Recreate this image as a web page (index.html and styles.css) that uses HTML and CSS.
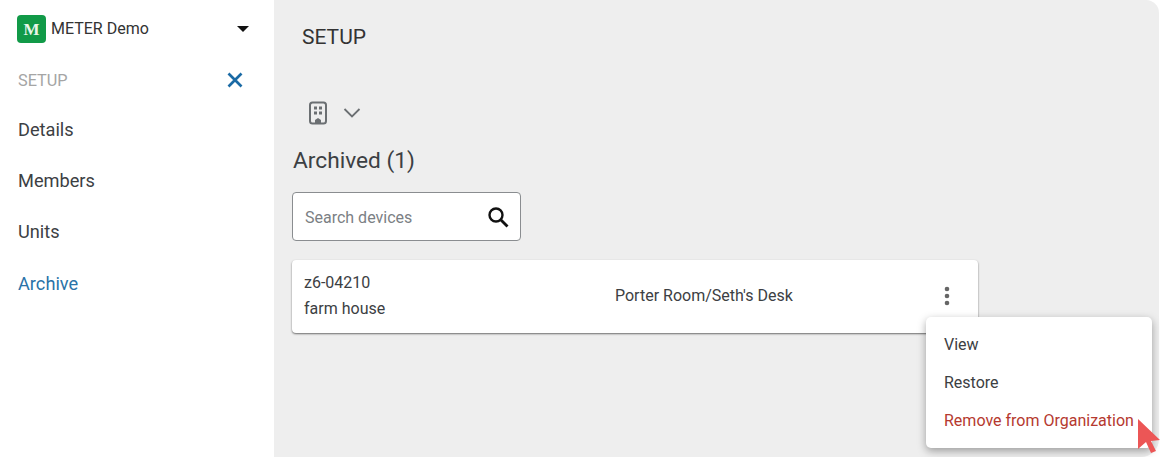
FILE: index.html
```html
<!DOCTYPE html>
<html lang="en">
<head>
    <meta charset="UTF-8">
    <meta name="viewport" content="width=device-width, initial-scale=1.0">
    <title>METER Demo - Setup</title>
    <link rel="stylesheet" href="styles.css">
</head>
<body>
    <div class="sidebar">
        <div class="org-row">
            <div class="org-logo">M</div>
            <span class="org-name">METER Demo</span>
            <svg class="org-caret" width="12" height="6" viewBox="0 0 12 6"><path d="M0 0h12L6 6z" fill="#111"/></svg>
        </div>
        <div class="setup-row">
            <span class="setup-label">SETUP</span>
            <svg class="setup-close" width="16" height="16" viewBox="0 0 16 16"><path d="M1.500 1.500l13 13M14.500 1.500l-13 13" stroke="#1a6aa5" stroke-width="2.700" fill="none"/></svg>
        </div>
        <div class="nav-item">Details</div>
        <div class="nav-item">Members</div>
        <div class="nav-item">Units</div>
        <div class="nav-item active">Archive</div>
    </div>

    <div class="main">
        <h1>SETUP</h1>
        <div class="filter-row">
            <svg width="20" height="24" viewBox="0 0 20 24">
                <rect x="2" y="1.500" width="16" height="21" rx="2.500" fill="none" stroke="#6b6f72" stroke-width="2"/>
                <path d="M6 5.500h3v3H6zM11 5.500h3v3h-3zM6 10.500h3v3H6zM11 10.500h3v3h-3zM7 22v-3l3-2 3 2v3z" fill="#6b6f72"/>
            </svg>
            <svg width="18" height="10" viewBox="0 0 18 10"><path d="M1.500 1l7.500 7.500L16.500 1" fill="none" stroke="#6b6f72" stroke-width="1.800"/></svg>
        </div>
        <h2>Archived (1)</h2>
        <div class="search-box">
            <span class="search-text">Search devices</span>
            <svg width="22" height="22" viewBox="0 0 22 22"><circle cx="9" cy="9" r="6.500" fill="none" stroke="#111" stroke-width="2.400"/><path d="M14 14l6.500 6.500" stroke="#111" stroke-width="2.800"/></svg>
        </div>
        <div class="device-card">
            <div class="device-info">
                <div>z6-04210</div>
                <div>farm house</div>
            </div>
            <div class="device-location">Porter Room/Seth's Desk</div>
            <svg class="device-more" width="8" height="20" viewBox="0 0 8 20"><circle cx="4" cy="3" r="2.300" fill="#666"/><circle cx="4" cy="10" r="2.300" fill="#666"/><circle cx="4" cy="17" r="2.300" fill="#666"/></svg>
        </div>

        <div class="menu">
            <div class="menu-item">View</div>
            <div class="menu-item">Restore</div>
            <div class="menu-item danger">Remove from Organization</div>
        </div>
        <svg class="cursor" width="24" height="34" viewBox="0 0 24 34"><path d="M1 0l22 21-9 1 5 10-5 2-5-11-8 7z" fill="#ec5656"/></svg>
    </div>
</body>
</html>
```

FILE: styles.css
```css
html, body {
    margin: 0;
    height: 100%;
}
body {
    font-family: Roboto, 'Liberation Sans', sans-serif;
    background: #fff;
    color: #3c4043;
    display: flex;
    height: 457px;
    overflow: hidden;
}
.sidebar {
    width: 274px;
    flex-shrink: 0;
    padding: 15px 31px 0 18px;
    box-sizing: border-box;
    background: #fff;
}
.org-row {
    display: flex;
    align-items: center;
    height: 28px;
    margin-left: -1px;
}
.org-logo {
    width: 29px;
    height: 28px;
    background: #119a48;
    border-radius: 4px;
    color: #e8f5e9;
    font-family: 'Liberation Serif', serif;
    font-weight: bold;
    font-size: 17px;
    text-align: center;
    line-height: 29px;
}
.org-name {
    margin: 0 0 2px 5px;
    font-size: 16px;
    color: #333;
}
.org-caret {
    margin-left: auto;
    margin-right: -6px;
}
.setup-row {
    display: flex;
    align-items: center;
    justify-content: space-between;
    margin-top: 25px;
    height: 24px;
}
.setup-label {
    font-size: 16.300px;
    color: #a5a5a5;
}
.nav-item {
    font-size: 18.200px;
    line-height: 24px;
    margin-top: 27px;
    color: #3c4043;
}
.setup-row + .nav-item {
    margin-top: 26px;
}
.nav-item.active {
    margin-top: 28px;
    color: #2a73a8;
}
.main {
    flex: 1;
    position: relative;
    background: #eeeeee;
    border-radius: 0 13px 18px 0;
    margin-right: 1px;
    padding: 0 0 0 18px;
}
h1 {
    margin: 0;
    padding: 24px 0 0 10px;
    font-size: 21px;
    line-height: 26px;
    font-weight: 400;
    color: #333;
}
.filter-row {
    display: flex;
    align-items: center;
    gap: 15px;
    margin: 50px 0 0 16px;
    height: 26px;
}
h2 {
    margin: 20px 0 0 1px;
    font-size: 22.700px;
    line-height: 30px;
    font-weight: 400;
    color: #3c4043;
}
.search-box {
    display: flex;
    align-items: center;
    justify-content: space-between;
    box-sizing: border-box;
    width: 229px;
    height: 49px;
    margin-top: 16px;
    padding: 0 11px 0 12px;
    background: #fff;
    border: 1px solid #8a8d90;
    border-radius: 4px;
}
.search-text {
    margin-top: 2px;
    font-size: 16px;
    color: #7b8084;
}
.device-card {
    display: flex;
    align-items: center;
    box-sizing: border-box;
    width: 686px;
    height: 73px;
    margin-top: 19px;
    padding: 0 27px 2px 12px;
    background: #fff;
    border-radius: 4px;
    box-shadow: 0 1px 2px rgba(0, 0, 0, 0.55);
    font-size: 16px;
}
.device-info {
    width: 311px;
    line-height: 26px;
}
.device-more {
    margin-left: auto;
}
.menu {
    position: absolute;
    left: 652px;
    top: 317px;
    width: 226px;
    height: 131px;
    padding: 9px 0;
    box-sizing: border-box;
    background: #fff;
    border-radius: 5px;
    box-shadow: 0 3px 8px rgba(0, 0, 0, 0.35);
}
.menu-item {
    font-size: 16px;
    line-height: 38px;
    padding-left: 18px;
}
.menu-item.danger {
    color: #b5392f;
}
.cursor {
    position: absolute;
    left: 863px;
    top: 419px;
}
```
